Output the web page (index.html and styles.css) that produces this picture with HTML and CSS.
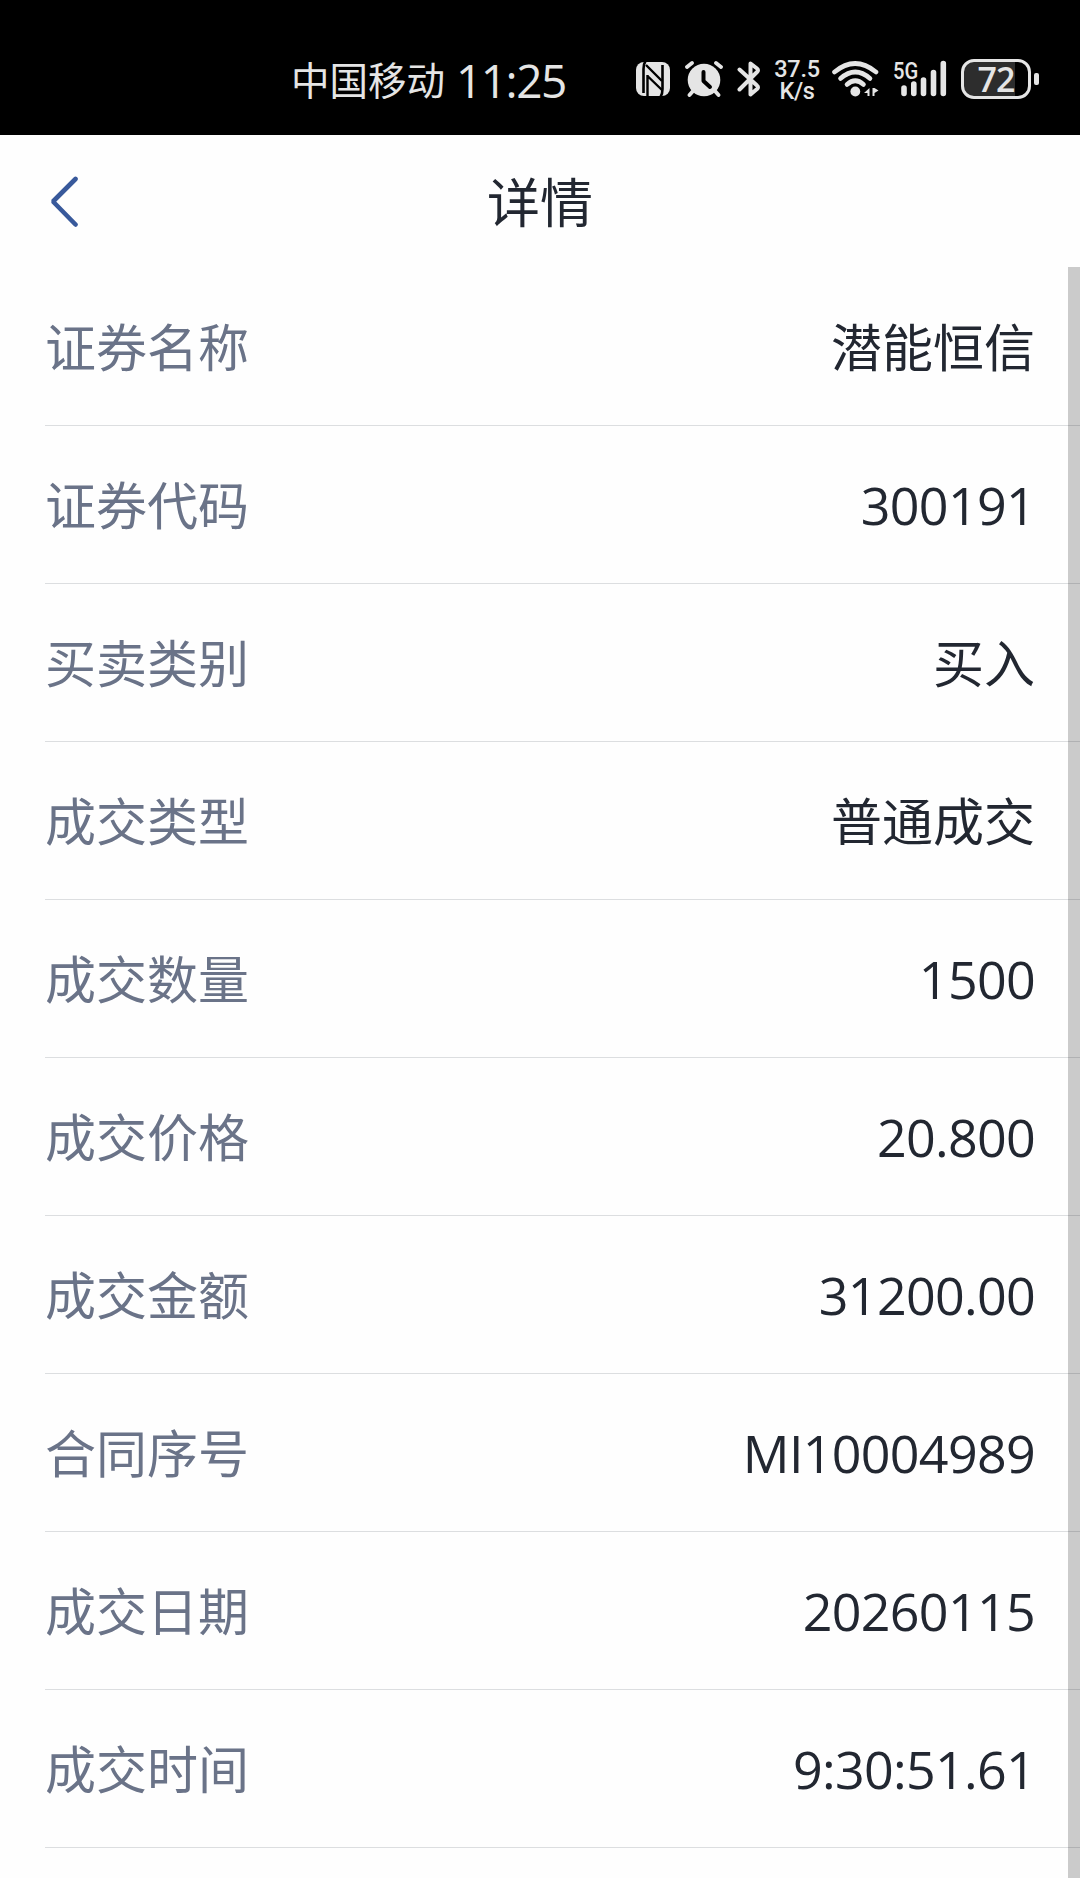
FILE: index.html
```
<!DOCTYPE html>
<html lang="zh-CN">
<head>
    <meta charset="UTF-8">
    <meta name="viewport" content="width=device-width, initial-scale=1.0">
    <title>详情</title>
    <link rel="stylesheet" href="styles.css">
</head>
<body>

    <div class="statusbar">
        <div class="carrier">中国移动</div>
        <div class="clock">11:25</div>

        <div class="icons">
            <!-- NFC -->
            <svg class="icon" width="34" height="40" viewBox="0 0 34 40">
                <rect x="0" y="3" width="34" height="34" rx="8" fill="#e5e5e5"/>
                <path d="M9.500 2 Q7.500 5 7.500 10 V34 M24.500 38 Q26.500 35 26.500 30 V6" stroke="#000" stroke-width="2.600" fill="none"/>
                <path d="M10 6 L26 22 M11.500 16 V38 M11.500 17 L26 31" stroke="#000" stroke-width="2.400" fill="none"/>
            </svg>
            <!-- Alarm -->
            <svg class="icon alarm" width="38" height="40" viewBox="0 0 38 40">
                <circle cx="19" cy="21" r="16.300" fill="#e5e5e5"/>
                <path d="M2 8 L7 4 M31 4 L36 8 M8 32 L4.500 36 M30 32 L33.500 36" stroke="#e5e5e5" stroke-width="3.800" stroke-linecap="round"/>
                <path d="M18.500 13 V22 L25 28" stroke="#000" stroke-width="4" stroke-linecap="round" stroke-linejoin="round" fill="none"/>
            </svg>
            <!-- Bluetooth -->
            <svg class="icon bluetooth" width="24" height="40" viewBox="0 0 24 40">
                <path d="M2.500 10.500 L20 26.500 Q22 28 20 30 L13.500 35.500 V4.500 L20 9.500 Q22 11 20 13 L2.500 30.500" stroke="#e5e5e5" stroke-width="4" stroke-linecap="round" stroke-linejoin="round" fill="none"/>
            </svg>
            <div class="speed">
                <span>37.5</span>
                <span>K/s</span>
            </div>
            <!-- Wifi -->
            <svg class="icon wifi" width="47" height="40" viewBox="0 0 47 40">
                <g stroke="#e5e5e5" stroke-width="4.600" stroke-linecap="round" fill="none">
                    <path d="M2.500 13 Q23 -4 44 13"/>
                    <path d="M8.500 19.500 Q23.300 6.500 38 19.500"/>
                    <path d="M15 25.500 Q23.300 18 31.500 25.500"/>
                </g>
                <circle cx="23.300" cy="32.500" r="4.900" fill="#e5e5e5"/>
                <path d="M37.500 29 V37 H35.500 V34 H32 Z M40.500 37 V29 H42.500 L46.500 31.500 L42.500 34 V37 Z" fill="#e5e5e5"/>
            </svg>
            <!-- Signal -->
            <div class="signal">
                <span class="network">5G</span>
                <svg class="icon" width="54" height="40" viewBox="0 0 54 40">
                    <path d="M11 29 V34.500 M20.800 25 V34.500 M30.500 21 V34.500 M40.500 13.500 V34.500 M50.300 4.500 V34.500" stroke="#e5e5e5" stroke-width="5.600" stroke-linecap="round"/>
                </svg>
            </div>
            <!-- Battery -->
            <div class="battery">
                <span>72</span>
            </div>
            <div class="battery-cap"></div>
        </div>
    </div>

    <div class="header">
        <svg class="back" width="28" height="52" viewBox="0 0 28 52">
            <path d="M25.500 4 L3 26.500 L25.500 49.500" stroke="#38599b" stroke-width="4.600" stroke-linecap="round" stroke-linejoin="bevel" fill="none"/>
        </svg>
        <h1 class="title">详情</h1>
    </div>

    <div class="list">
        <div class="row">
            <div class="label">证券名称</div>
            <div class="value">潜能恒信</div>
        </div>
        <div class="row">
            <div class="label">证券代码</div>
            <div class="value number">300191</div>
        </div>
        <div class="row">
            <div class="label">买卖类别</div>
            <div class="value">买入</div>
        </div>
        <div class="row">
            <div class="label">成交类型</div>
            <div class="value">普通成交</div>
        </div>
        <div class="row">
            <div class="label">成交数量</div>
            <div class="value number">1500</div>
        </div>
        <div class="row">
            <div class="label">成交价格</div>
            <div class="value number">20.800</div>
        </div>
        <div class="row">
            <div class="label">成交金额</div>
            <div class="value number">31200.00</div>
        </div>
        <div class="row">
            <div class="label">合同序号</div>
            <div class="value number">MI10004989</div>
        </div>
        <div class="row">
            <div class="label">成交日期</div>
            <div class="value number">20260115</div>
        </div>
        <div class="row">
            <div class="label">成交时间</div>
            <div class="value number">9:30:51.61</div>
        </div>
        <div class="scrollbar"></div>
    </div>

</body>
</html>
```
FILE: styles.css
```
* {
    margin: 0;
    padding: 0;
    box-sizing: border-box;
}

body {
    height: 1878px;
    overflow: hidden;
    display: flex;
    flex-direction: column;
    background: #fefefe;
    color: #222731;
    font-family: "Noto Sans CJK SC", sans-serif;
}

.statusbar {
    flex: none;
    height: 135px;
    padding: 23px 41px 0 291px;
    display: flex;
    align-items: center;
    background: #000;
    color: #e5e5e5;
    white-space: nowrap;
}

.carrier {
    width: 165px;
    padding-bottom: 2px;
    font-size: 38.5px;
    line-height: 56px;
}

.clock {
    padding-top: 2px;
    font-family: "Open Sans", sans-serif;
    font-size: 46px;
    line-height: 56px;
    letter-spacing: -1.5px;
}

.icons {
    margin-left: auto;
    display: flex;
    align-items: center;
}

.icon {
    display: block;
}

.alarm {
    margin-left: 15px;
}

.bluetooth {
    margin-left: 14px;
}

.speed {
    width: 46px;
    margin-left: 13px;
    padding-top: 2px;
    display: flex;
    flex-direction: column;
    align-items: center;
    font-family: Roboto, sans-serif;
    font-size: 23.5px;
    font-weight: 500;
    line-height: 22px;
    letter-spacing: -0.3px;
}

.wifi {
    margin-left: 12px;
}

.signal {
    position: relative;
    margin-left: 14px;
}

/* sits over the short bars */
.network {
    position: absolute;
    left: 0;
    top: 0;
    font-family: Roboto, sans-serif;
    font-size: 24px;
    font-weight: 500;
    line-height: 24px;
    transform: scaleX(0.84);
    transform-origin: left;
}

.battery {
    width: 70px;
    height: 40px;
    margin-left: 14px;
    display: flex;
    align-items: center;
    justify-content: center;
    border: 3px solid #e5e5e5;
    border-radius: 13px;
    background: linear-gradient(to right, #2d2d2d 80%, #000 80%);
    font-family: "Open Sans", sans-serif;
    font-size: 34px;
    font-weight: 600;
    line-height: 34px;
    letter-spacing: -1px;
}

.battery-cap {
    width: 5px;
    height: 12px;
    margin-left: 3px;
    border-radius: 2px;
    background: #e5e5e5;
}

.header {
    flex: none;
    height: 132px;
    padding: 0 50px;
    display: grid;
    grid-template-columns: 1fr auto 1fr;
    align-items: center;
}

.title {
    padding-bottom: 2px;
    font-size: 53px;
    font-weight: 400;
    line-height: 80px;
}

.list {
    position: relative;
    flex: 1;
    padding: 1px 0 0 45px;
}

.row {
    height: 158px;
    padding-right: 45px;
    display: flex;
    justify-content: space-between;
    align-items: center;
    border-bottom: 1px solid #dcdee0;
    font-size: 51px;
    line-height: 76px;
}

.label,
.value {
    padding-bottom: 3px;
}

.label {
    color: #6a7388;
}

.value.number {
    padding-bottom: 0;
    font-family: "Open Sans", sans-serif;
    font-size: 52px;
    letter-spacing: -0.7px;
}

.scrollbar {
    position: absolute;
    top: 0;
    right: 0;
    bottom: 0;
    width: 12px;
    background: rgba(0, 0, 0, 0.2);
}
```
